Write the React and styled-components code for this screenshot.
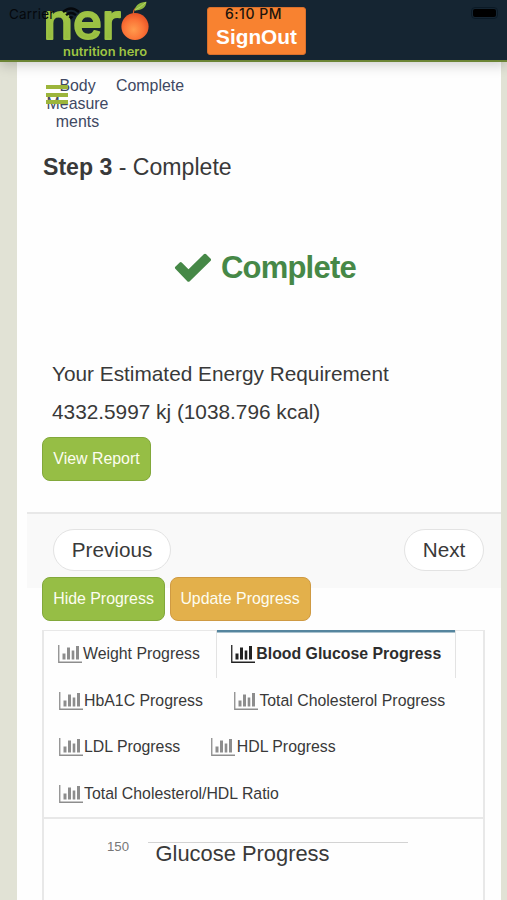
import React from 'react';
import styled, { createGlobalStyle } from 'styled-components';

const Global = createGlobalStyle`
  * { box-sizing: border-box; }
  html, body { margin: 0; background: #e1e2d5; overflow: hidden; }
  body { font-family: "Liberation Sans", Arial, sans-serif; color: #393939; }
`;

const Screen = styled.div`
  position: relative;
  width: 507px;
  height: 900px;
  overflow: hidden;
  background: #e1e2d5;
`;

const StatusBar = styled.div`
  position: absolute;
  inset: 0 0 auto 0;
  height: 27px;
  z-index: 3;
  display: grid;
  grid-template-columns: 1fr auto 1fr;
  align-items: center;
  padding: 0 9px 0 9px;
  font-family: Inter, sans-serif;
  color: #05080c;
`;

const Carrier = styled.div`
  display: flex;
  align-items: center;
  gap: 7px;
  font-size: 13.5px;
  letter-spacing: 0.2px;
`;

const Clock = styled.div`
  font-size: 14px;
  font-weight: 500;
  letter-spacing: 0.5px;
  color: #20140c;
`;

const Battery = styled.div`
  justify-self: end;
  width: 27px;
  height: 12px;
  border: 1px solid #0b1a26;
  border-radius: 4px;
  padding: 1px;
  margin-top: -1px;

  &::after {
    content: '';
    display: block;
    height: 8px;
    border-radius: 2px;
    background: #000;
  }
`;

const Header = styled.header`
  position: relative;
  z-index: 2;
  display: flex;
  align-items: flex-start;
  height: 62px;
  padding-left: 40px;
  background: #152532;
  border-bottom: 2px solid #6b8435;
  box-shadow: 0 3px 12px rgba(0, 0, 0, 0.2);
`;

const Logo = styled.svg`
  flex: none;
  width: 115px;
  height: 60px;
  margin-right: 52px;
`;

const SignOut = styled.button`
  width: 99px;
  height: 48px;
  margin-top: 7px;
  padding: 11px 0 0;
  border: 1px solid #d9702c;
  border-radius: 3px;
  background: #f88230;
  color: #fff;
  font: bold 20.8px/32px "Liberation Sans", sans-serif;
`;

const Page = styled.main`
  height: 838px;
  margin: 0 6px 0 17px;
  padding-left: 10px;
  background: #fefefe;
`;

const Steps = styled.nav`
  position: relative;
  display: flex;
  gap: 5px;
  height: 88px;
  padding: 15px 0 0 17px;
`;

const StepLabel = styled.div`
  width: ${(p) => p.$width}px;
  text-align: center;
  font-size: 15.9px;
  line-height: 18px;
  color: #404862;
`;

const MenuToggle = styled.button`
  position: absolute;
  left: 19px;
  top: 23px;
  display: flex;
  flex-direction: column;
  gap: 3.5px;
  padding: 0;
  border: 0;
  background: none;
`;

const MenuLine = styled.span`
  display: block;
  width: 22px;
  height: 4px;
  background: #9cb53b;
`;

const StepTitle = styled.h3`
  margin: 0 0 0 16px;
  font-size: 23.1px;
  font-weight: normal;
  line-height: 34px;
`;

const Success = styled.div`
  display: flex;
  align-items: center;
  height: 40px;
  margin: 64px 0 0 147px;
  gap: 9px;
  color: #468847;
  font-size: 31px;
  font-weight: bold;
  letter-spacing: -0.8px;
`;

const Energy = styled.div`
  margin: 67px 0 0 25px;
  font-size: 20.8px;
  line-height: 38px;
`;

const Button = styled.button`
  width: ${(p) => p.$width}px;
  height: 44px;
  padding: 0;
  border: 1px solid ${(p) => (p.$amber ? '#cf9a43' : '#82a83b')};
  border-radius: 8px;
  background: ${(p) => (p.$amber ? '#e3b04b' : '#96be45')};
  color: #fdfdf0;
  font: 15.9px/42px "Liberation Sans", sans-serif;
`;

const ReportRow = styled.div`
  display: flex;
  padding: 6px 0 0 15px;
`;

const Pager = styled.div`
  display: flex;
  justify-content: space-between;
  align-items: flex-start;
  height: 76px;
  margin-top: 30.5px;
  padding: 15.5px 17px 0 26px;
  border-top: 2px solid #e8e8e8;
  background: #f9f9f9;
`;

const Pill = styled.button`
  width: ${(p) => p.$width}px;
  height: 42px;
  padding: 0 0 1px;
  border: 1.5px solid #e3e3e3;
  border-radius: 21px;
  background: #fff;
  color: #393939;
  font: 20.7px/38px "Liberation Sans", sans-serif;
`;

const ProgressButtons = styled.div`
  position: relative;
  display: flex;
  gap: 4.5px;
  margin: -10.5px 0 0 15px;
`;

const Panel = styled.section`
  width: 443px;
  height: 290px;
  margin: 9px 0 0 15px;
  border: 2px solid #e8e8e8;
  border-top-width: 1px;
  border-bottom: 0;
  background: #fefefe;
`;

const TabList = styled.div`
  height: 188px;
  border-bottom: 2px solid #e8e8e8;
`;

const TabRow = styled.div`
  display: flex;
  height: 46.5px;
  padding-left: ${(p) => p.$inset}px;
  gap: ${(p) => p.$gap}px;
`;

const TabItem = styled.div`
  display: flex;
  align-items: center;
  gap: 1.5px;
  height: 46px;
  font-size: 15.85px;
  white-space: nowrap;
  font-weight: ${(p) => (p.$active ? 'bold' : 'normal')};
  color: ${(p) => (p.$active ? '#2d2d2d' : '#393939')};
  ${(p) =>
    p.$active &&
    `
    position: relative;
    width: 240px;
    height: 48px;
    padding: 0 0 0 14px;
    margin-top: -1px;
    border: solid #e3e3e3;
    border-width: 0 1px 0 1px;
    box-shadow: inset 0 2.5px 0 #55859e;
  `}
`;

const ChartSvg = styled.svg`
  flex: none;
  width: 24px;
  height: 18px;
  color: ${(p) => (p.$active ? '#222' : '#8d8d8d')};
`;

const Chart = styled.div`
  display: grid;
  grid-template-columns: 40px 260px;
  column-gap: 19px;
  padding: 20px 0 0 45px;
`;

const AxisLabel = styled.div`
  font-size: 13.2px;
  line-height: 15px;
  text-align: right;
  color: #777;
`;

const Plot = styled.div`
  margin-top: 3px;
  border-top: 1.5px solid #d3d3d3;
  padding-left: 7.5px;
  font-size: 21.9px;
  line-height: 22px;
`;

const ChartIcon = ({ active }) => (
  <ChartSvg viewBox="0 0 24 18" $active={active}>
    <path d="M.75 0v17.25H24" fill="none" stroke="currentColor" strokeWidth="1.3" />
    <path d="M4.500 8.500h3v6h-3zM9 2.500h3v12H9zM13.700 5.500h2.600v9h-2.600zM18 1h3v13.500h-3z" fill="currentColor" />
  </ChartSvg>
);

const Tab = ({ active, children }) => (
  <TabItem $active={active}>
    <ChartIcon active={active} />
    {children}
  </TabItem>
);

const NeroLogo = () => (
  <Logo viewBox="40 0 115 60">
    <defs>
      <linearGradient id="leafy" x1="0" y1="0" x2="0" y2="1">
        <stop offset="0" stopColor="#a9ca4b" />
        <stop offset="1" stopColor="#91ba3c" />
      </linearGradient>
      <radialGradient id="orange" cx=".45" cy=".62" r=".6">
        <stop offset="0" stopColor="#ff9b4d" />
        <stop offset=".6" stopColor="#fb7437" />
        <stop offset="1" stopColor="#e95527" />
      </radialGradient>
    </defs>
    <text x="43.500" y="39" fontFamily="Inter, sans-serif" fontSize="49" fontWeight="500" textLength="77.500" lengthAdjust="spacingAndGlyphs" fill="url(#leafy)" stroke="#9cc244" strokeWidth="2" strokeLinejoin="round" strokeLinecap="round">ner</text>
    <circle cx="135" cy="26.500" r="13.600" fill="url(#orange)" />
    <path d="M133.500 14Q133 10 136 8" fill="none" stroke="#d9632d" strokeWidth="1.200" />
    <path d="M134.500 10.500C136 4 140 2.500 146.500 1.800C146 7 143 10.500 134.500 10.500Z" fill="#8eb83f" />
    <path d="M135 10.200Q140 7.500 146 2.300" fill="none" stroke="#bad46c" strokeWidth=".9" />
    <text x="63" y="55.500" fontFamily="Inter, sans-serif" fontSize="12.400" fontWeight="600" textLength="84" lengthAdjust="spacingAndGlyphs" fill="#9fc443">nutrition hero</text>
  </Logo>
);

export default function App() {
  return (
    <Screen>
      <Global />
      <StatusBar>
        <Carrier>
          Carrier
          <svg width="18" height="13" viewBox="0 0 18 13" fill="none" stroke="#05080c" strokeWidth="2.400">
            <path d="M1 5Q9-2 17 5M4 8.200Q9 4 14 8.200" />
            <path d="M6.500 10Q9 8 11.500 10L9 12.500Z" fill="#05080c" stroke="none" />
          </svg>
        </Carrier>
        <Clock>6:10 PM</Clock>
        <Battery />
      </StatusBar>
      <Header>
        <NeroLogo />
        <SignOut>SignOut</SignOut>
      </Header>
      <Page>
        <Steps>
          <StepLabel $width={67}>Body<br />Measure<br />ments</StepLabel>
          <StepLabel $width={64}>Complete</StepLabel>
          <MenuToggle aria-label="Menu">
            <MenuLine />
            <MenuLine />
            <MenuLine />
          </MenuToggle>
        </Steps>
        <StepTitle><b>Step 3</b> - Complete</StepTitle>
        <Success>
          <svg width="38" height="30" viewBox="0 0 38 30">
            <path d="M1.300 13.800L5.700 9.500Q6.700 8.700 7.700 9.500L14.500 16.200L29.800 1.200Q31 .200 32.200 1.200L36.700 5.700Q37.500 6.700 36.700 7.700L15.500 28.400Q14.500 29.300 13.500 28.400L1.300 15.800Q.500 14.800 1.300 13.800Z" fill="currentColor" />
          </svg>
          Complete
        </Success>
        <Energy>
          <div>Your Estimated Energy Requirement</div>
          <div>4332.5997 kj (1038.796 kcal)</div>
        </Energy>
        <ReportRow>
          <Button $width={109}>View Report</Button>
        </ReportRow>
        <Pager>
          <Pill $width={118}>Previous</Pill>
          <Pill $width={80}>Next</Pill>
        </Pager>
        <ProgressButtons>
          <Button $width={123}>Hide Progress</Button>
          <Button $width={141} $amber>Update Progress</Button>
        </ProgressButtons>
        <Panel>
          <TabList>
            <TabRow $inset={13.500} $gap={16}>
              <Tab>Weight Progress</Tab>
              <Tab active>Blood Glucose Progress</Tab>
            </TabRow>
            <TabRow $inset={14.500} $gap={31}>
              <Tab>HbA1C Progress</Tab>
              <Tab>Total Cholesterol Progress</Tab>
            </TabRow>
            <TabRow $inset={14.500} $gap={31}>
              <Tab>LDL Progress</Tab>
              <Tab>HDL Progress</Tab>
            </TabRow>
            <TabRow $inset={14.500} $gap={30}>
              <Tab>Total Cholesterol/HDL Ratio</Tab>
            </TabRow>
          </TabList>
          <Chart>
            <AxisLabel>150</AxisLabel>
            <Plot>Glucose Progress</Plot>
          </Chart>
        </Panel>
      </Page>
    </Screen>
  );
}
